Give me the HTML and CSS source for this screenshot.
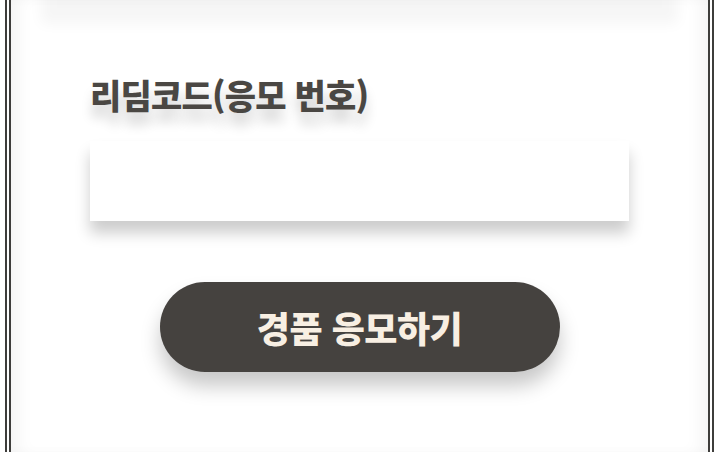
FILE: index.html
```html
<!DOCTYPE html>
<html lang="ko">
<head>
  <meta charset="UTF-8">
  <meta name="viewport" content="width=device-width, initial-scale=1.0">
  <title>경품 응모</title>
  <link rel="stylesheet" href="styles.css">
</head>
<body>
  <div class="frame">
    <div class="frame-top"></div>

    <form class="redeem-form" onsubmit="return false">
      <label class="field-label" for="redeem-code">리딤코드(응모 번호)</label>
      <input class="field-input" id="redeem-code" type="text" autocomplete="off">

      <div class="actions">
        <button class="submit-button" type="submit">경품 응모하기</button>
      </div>
    </form>
  </div>
</body>
</html>
```

FILE: styles.css
```css
body {
  font-family: "Noto Sans CJK KR", "Noto Sans", sans-serif;
  margin: 0;
  padding: 0;
  background-color: #fff;
  color: #4a4743;
  overflow: hidden;
}
.frame {
  display: flow-root;
  margin: 0 6px 0 5px;
  height: 100vh;
  border-left: 6px double #3e3d3b;
  border-right: 6px double #3e3d3b;
  box-shadow: inset 14px 0 18px -8px rgba(0,0,0,0.05), inset -14px 0 18px -8px rgba(0,0,0,0.05);
  box-sizing: border-box;
}
/* bottom of the card above, scrolled out of view */
.frame-top {
  height: 40px;
  margin: -40px 30px 0;
  background-color: #fff;
  box-shadow: 0 24px 14px rgba(0,0,0,0.04);
}
.redeem-form {
  display: flex;
  flex-direction: column;
  padding: 72px 79px 0;
}
.field-label {
  font-size: 34px;
  font-weight: 900;
  letter-spacing: -0.8px;
  line-height: 46px;
  color: #4a4743;
  text-shadow: 0 12px 12px rgba(0,0,0,0.18);
}
.field-input {
  box-sizing: border-box;
  margin-top: 23px;
  height: 80px;
  border: none;
  outline: none;
  background-color: #fff;
  box-shadow: 0 12px 14px rgba(0,0,0,0.2);
  font-family: inherit;
  font-size: 24px;
  padding: 0 20px;
}
.actions {
  display: flex;
  justify-content: center;
  margin-top: 61px;
}
.submit-button {
  width: 400px;
  height: 90px;
  border: none;
  border-radius: 45px;
  background-color: #45423f;
  color: #f8efe3;
  font-family: inherit;
  font-size: 36px;
  font-weight: 900;
  letter-spacing: -0.5px;
  cursor: pointer;
  box-shadow: 0 14px 20px rgba(0,0,0,0.22);
}
```
